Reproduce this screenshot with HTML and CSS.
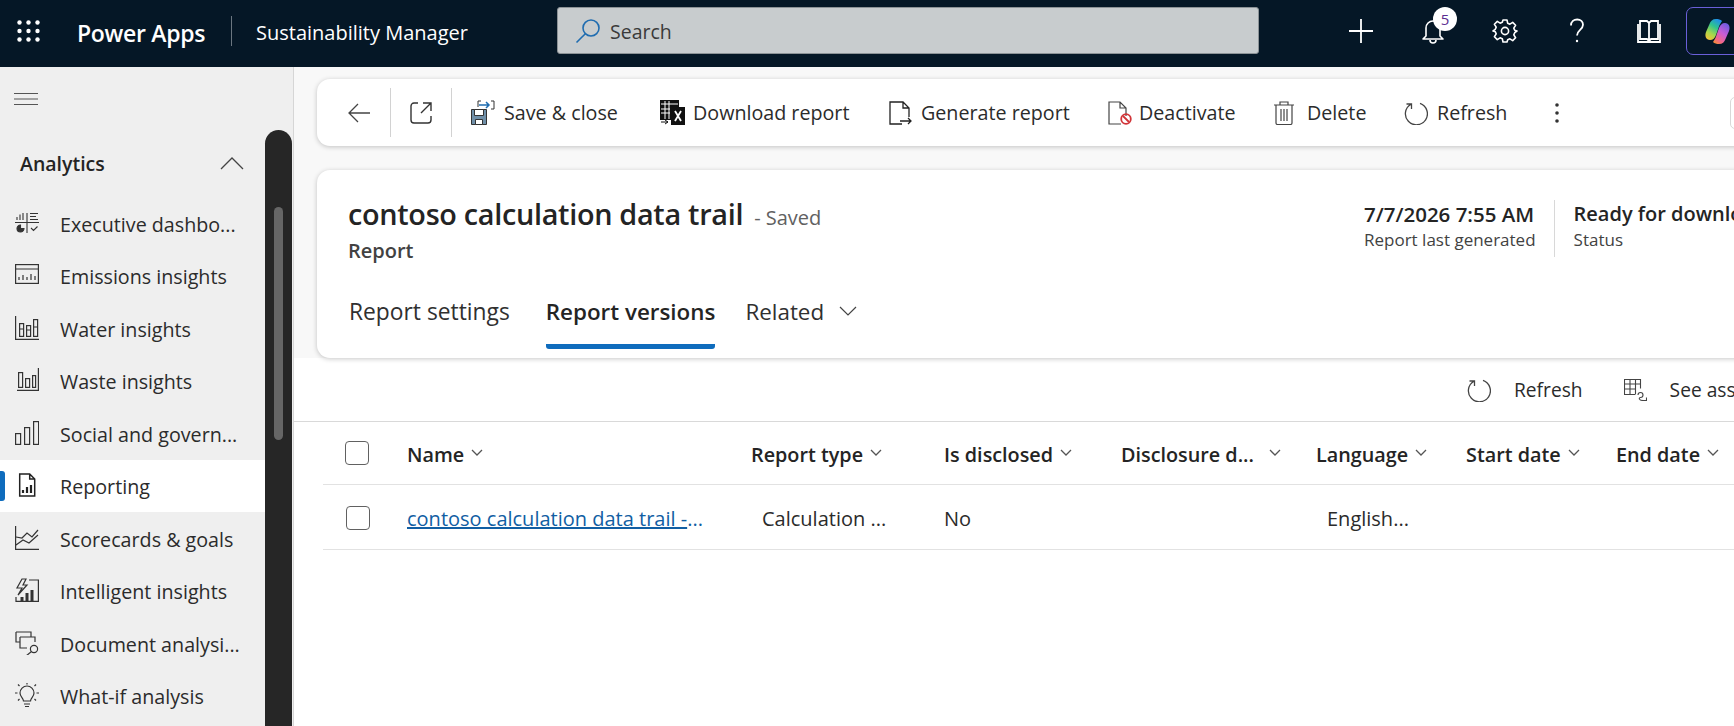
FILE: index.html
```html
<!DOCTYPE html>
<html lang="en">
<head>
    <meta charset="UTF-8">
    <title>Sustainability Manager</title>
    <link rel="stylesheet" href="styles.css">
</head>
<body>
<svg class="defs" width="0" height="0">
    <defs>
        <linearGradient id="copA" x1="0.7" y1="0" x2="0.2" y2="1">
            <stop offset="0" stop-color="#1f8fe8"/><stop offset="0.35" stop-color="#2fc48f"/><stop offset="0.7" stop-color="#a6d84a"/><stop offset="1" stop-color="#f2c13a"/>
        </linearGradient>
        <linearGradient id="copB" x1="0.8" y1="0" x2="0.2" y2="1">
            <stop offset="0" stop-color="#6a5ce0"/><stop offset="0.45" stop-color="#c65cd6"/><stop offset="0.8" stop-color="#f2668a"/><stop offset="1" stop-color="#f58a3c"/>
        </linearGradient>
    </defs>
</svg>

<header class="topbar">
    <svg class="waffle" width="23" height="22" viewBox="0 0 23 22" fill="#fff">
        <circle cx="2.5" cy="2.5" r="2.2"/><circle cx="11.5" cy="2.5" r="2.2"/><circle cx="20.5" cy="2.5" r="2.2"/>
        <circle cx="2.5" cy="11" r="2.2"/><circle cx="11.5" cy="11" r="2.2"/><circle cx="20.5" cy="11" r="2.2"/>
        <circle cx="2.5" cy="19.5" r="2.2"/><circle cx="11.5" cy="19.5" r="2.2"/><circle cx="20.5" cy="19.5" r="2.2"/>
    </svg>
    <span class="brand">Power Apps</span>
    <span class="brand-sep"></span>
    <span class="app-name">Sustainability Manager</span>
    <div class="search">
        <svg width="26" height="26" viewBox="0 0 26 26" fill="none" stroke="#1f6cb0" stroke-width="1.6">
            <circle cx="16" cy="10" r="8"/><path d="M10.3 15.7 1.5 24.5"/>
        </svg>
        <span>Search</span>
    </div>
    <div class="top-icons">
        <svg class="top-icon" width="26" height="26" viewBox="0 0 26 26" stroke="#fff" stroke-width="1.8" fill="none"><path d="M13 1v24M1 13h24"/></svg>
        <span class="bell">
            <svg width="26" height="26" viewBox="0 0 26 26" stroke="#fff" stroke-width="1.6" fill="none">
                <path d="M6 18V10a7 7 0 0 1 14 0v8l3 3H3z" stroke-linejoin="round"/><path d="M10 22a3 3 0 0 0 6 0"/>
            </svg>
            <span class="badge">5</span>
        </span>
        <svg class="top-icon" width="26" height="26" viewBox="0 0 26 26" stroke="#fff" stroke-width="1.6" fill="none">
            <circle cx="13" cy="13" r="3.6"/>
            <path d="M11 2h4l.7 3.3 2.2.9 2.8-1.8 2.9 2.9-1.8 2.8.9 2.2L25 13l-2.3 1.7-.9 2.2 1.8 2.8-2.9 2.9-2.8-1.8-2.2.9L15 24h-4l-.7-3.3-2.2-.9-2.8 1.8-2.9-2.9 1.8-2.8-.9-2.2L1 13l2.3-1.7.9-2.2-1.8-2.8 2.9-2.9 2.8 1.8 2.2-.9z" stroke-linejoin="round"/>
        </svg>
        <svg class="top-icon" width="26" height="26" viewBox="0 0 26 26" stroke="#fff" stroke-width="1.8" fill="none">
            <path d="M7 7.5C7 3.5 10 1.5 13.2 1.5c3.400 0 5.800 2.300 5.800 5.300 0 5-6 5.200-6 10.700"/><circle cx="13" cy="23" r="1.200" fill="#fff" stroke="none"/>
        </svg>
        <svg class="top-icon" width="26" height="26" viewBox="0 0 26 26" stroke="#fff" stroke-width="1.8" fill="none">
            <path d="M4 3h7l2 2 2-2h7v18h-7l-2 2-2-2H4zM13 5v18M2 6v18h22V6"/>
        </svg>
        <div class="copilot">
            <svg width="27" height="27" viewBox="0 0 27 27">
                <path d="M18 3c-1.500-1.500-3.500-2-6-2-3.500 0-5.500 2-6.500 5L2 14c-1.500 4 0 8 4 8 3 0 5-2 6-5l2.500-7c.5-2 2-5 3.500-7z" fill="url(#copA)"/>
                <path d="M9 24c1.500 1.500 3.500 2 6 2 3.500 0 5.500-2 6.500-5L25 13c1.500-4 0-8-4-8-3 0-5 2-6 5l-2.500 7c-.5 2-2 5-3.500 7z" fill="url(#copB)"/>
            </svg>
        </div>
    </div>
</header>

<div class="layout">
    <aside class="sidebar">
        <div class="side-col">
            <svg class="hamburger" width="24" height="12" viewBox="0 0 24 12" stroke="#555" stroke-width="1"><path d="M0 .5h24M0 6h24M0 11.500h24"/></svg>
            <div class="side-group">
                <span>Analytics</span>
                <svg width="24" height="14" viewBox="0 0 24 14" fill="none" stroke="#444" stroke-width="1.300"><path d="M1 13 12 2l11 11"/></svg>
            </div>
            <nav class="side-nav">
                <a class="side-item">
                    <svg width="24" height="24" viewBox="0 0 24 24" fill="none" stroke="#333" stroke-width="1.100"><path d="M0 11.500h24M12 2v20M2 9V6M5 9V3.500M8 9V2M15 2.500h8M15 5.500h6M15 8.500h8M16 17l2.500 2.500 4-4"/><path d="M5.500 14a3.500 3.500 0 1 0 3.500 3.500H5.500z" fill="#333"/></svg>
                    Executive dashbo...
                </a>
                <a class="side-item">
                    <svg width="24" height="24" viewBox="0 0 24 24" fill="none" stroke="#333" stroke-width="1.200"><rect x=".6" y="1.600" width="22.800" height="18.800"/><path d="M1 6h22M4 17v-3M8 17v-5M12 17v-3M16 17v-6M20 17v-4"/></svg>
                    Emissions insights
                </a>
                <a class="side-item">
                    <svg width="24" height="24" viewBox="0 0 24 24" fill="none" stroke="#333" stroke-width="1.200"><path d="M.6 0v23.400H24"/><rect x="4.600" y="7.600" width="4" height="12.800"/><rect x="11.600" y="9.600" width="4" height="10.800"/><rect x="18.600" y="3.600" width="4" height="16.800"/><path d="M4.600 13h4M11.600 14h4M18.600 11h4"/></svg>
                    Water insights
                </a>
                <a class="side-item">
                    <svg width="24" height="24" viewBox="0 0 24 24" fill="none" stroke="#333" stroke-width="1.200"><path d="M2 22.400h21.400V0"/><rect x="3.600" y="4.600" width="4" height="14.800"/><rect x="10.600" y="10.600" width="4" height="8.800"/><rect x="17.600" y="7.600" width="3" height="11.800"/></svg>
                    Waste insights
                </a>
                <a class="side-item">
                    <svg width="24" height="24" viewBox="0 0 24 24" fill="none" stroke="#333" stroke-width="1.200"><rect x=".6" y="12.600" width="5" height="10.800"/><rect x="9.600" y="6.600" width="5" height="16.800"/><rect x="18.600" y=".6" width="5" height="22.800"/></svg>
                    Social and govern...
                </a>
                <a class="side-item active">
                    <svg width="24" height="24" viewBox="0 0 24 24" fill="none" stroke="#222" stroke-width="1.500"><path d="M4.700 1h10l5 5v17h-15zM14.700 1v5h5"/><path d="M8 20v-3M12 20v-6M16 20v-8" stroke-width="2.200"/></svg>
                    Reporting
                </a>
                <a class="side-item">
                    <svg width="24" height="24" viewBox="0 0 24 24" fill="none" stroke="#333" stroke-width="1.200"><path d="M.6 0v23.400H24M1 19l7-5 6 3 9-8"/><path d="M1 11l6 1 5-5 5 4 6-7"/></svg>
                    Scorecards &amp; goals
                </a>
                <a class="side-item">
                    <svg width="24" height="24" viewBox="0 0 24 24" fill="none" stroke="#333" stroke-width="1.200"><path d="M7 1 2 10h5l-4 7 9-10H8l3-6z"/><path d="M14 2h9.400v21.400H1V19"/><path d="M7 23v-4M12 23v-8M17 23v-11" stroke-width="3"/></svg>
                    Intelligent insights
                </a>
                <a class="side-item">
                    <svg width="24" height="24" viewBox="0 0 24 24" fill="none" stroke="#333" stroke-width="1.200"><path d="M1 1h15v5M1 1v10h4"/><path d="M5 6h15v5M5 6v11h7"/><circle cx="19" cy="18" r="3.600"/><path d="M16.500 20.500 11 25"/></svg>
                    Document analysi...
                </a>
                <a class="side-item">
                    <svg width="24" height="24" viewBox="0 0 24 24" fill="none" stroke="#333" stroke-width="1.200"><path d="M8.500 18c0-3-3.500-4-3.500-8a7 7 0 0 1 14 0c0 4-3.500 5-3.500 8zM9 21h6M10 23.500h4M12 0v1.500M2.500 10H0M24 10h-2.500M4.500 3 3 1.500M19.500 3 21 1.500M4.500 16 3 17.500M19.500 16l1.500 1.500"/></svg>
                    What-if analysis
                </a>
            </nav>
        </div>
        <div class="side-rail"><div class="side-thumb"></div></div>
    </aside>

    <main class="content">
        <div class="head-area">
            <div class="card toolbar">
                <button class="tool tool-back">
                    <svg width="22" height="20" viewBox="0 0 22 20" fill="none" stroke="#444" stroke-width="1.300"><path d="M22 10H1M10 1l-9 9 9 9"/></svg>
                </button>
                <span class="tool-sep"></span>
                <button class="tool tool-open">
                    <svg width="22" height="22" viewBox="0 0 22 22" fill="none" stroke="#333" stroke-width="1.400"><path d="M8 1H4a3 3 0 0 0-3 3v14a3 3 0 0 0 3 3h14a3 3 0 0 0 3-3v-4M13 1h8v8M21 1 11 11"/></svg>
                </button>
                <span class="tool-sep"></span>
                <button class="tool tool-save">
                    <svg width="24" height="25" viewBox="0 0 24 25" fill="none">
                        <path d="M.5 9.500h15v15H.5z" fill="#6f8fa8" stroke="#333"/><path d="M3.500 9.500h9v6h-9zM4.500 19.500h7v5h-7z" fill="#fff" stroke="#333"/>
                        <path d="M7 7V1h3M20 1h3v8h-3" stroke="#333"/><path d="M8 5h10M15 2l3 3-3 3" stroke="#1f6cb0" stroke-width="1.500"/>
                    </svg>
                    Save &amp; close
                </button>
                <button class="tool tool-download">
                    <svg width="25" height="25" viewBox="0 0 25 25" fill="none">
                        <path d="M0 0h19v7h-7v13H0z" fill="#111"/><path d="M1 4h17M5 1v18M9 1v18M1 9h9M1 13h9" stroke="#fff"/>
                        <rect x="11" y="7" width="14" height="18" fill="#111"/><path d="M15 11l6 10M21 11l-6 10" stroke="#fff" stroke-width="1.800"/>
                        <path d="M1 22h7M5 20l3 2-3 2" stroke="#111"/>
                    </svg>
                    Download report
                </button>
                <button class="tool tool-generate">
                    <svg width="23" height="24" viewBox="0 0 23 24" fill="none" stroke="#222" stroke-width="1.300">
                        <path d="M13 23H1V1h13l6 6v9M14 1v6h6"/><path d="M11 20h11M19 17l3 3-3 3"/>
                    </svg>
                    Generate report
                </button>
                <button class="tool tool-deactivate">
                    <svg width="24" height="24" viewBox="0 0 24 24" fill="none">
                        <path d="M13 23H1V1h11l6 6v8M12 1v6h6" stroke="#444" stroke-width="1.200"/>
                        <circle cx="18" cy="18" r="4.800" stroke="#d13438" stroke-width="1.800"/><path d="m15 15 6 6" stroke="#d13438" stroke-width="1.800"/>
                    </svg>
                    Deactivate
                </button>
                <button class="tool tool-delete">
                    <svg width="20" height="24" viewBox="0 0 20 24" fill="none" stroke="#444" stroke-width="1.200"><path d="M0 4h20M6 4V1h8v3M2 4v18a1.500 1.500 0 0 0 1.500 1.500h13A1.500 1.500 0 0 0 18 22V4M7 8v12M10 8v12M13 8v12"/></svg>
                    Delete
                </button>
                <button class="tool tool-refresh">
                    <svg width="24" height="24" viewBox="0 0 24 24" fill="none" stroke="#444" stroke-width="1.300"><path d="M7 3.200a11 11 0 1 0 9-.8M7.500 8V3H2.500"/></svg>
                    Refresh
                </button>
                <svg class="tool-more" width="4" height="20" viewBox="0 0 4 20" fill="#333"><circle cx="2" cy="2" r="1.800"/><circle cx="2" cy="10" r="1.800"/><circle cx="2" cy="18" r="1.800"/></svg>
                <span class="tool-box"></span>
            </div>

            <div class="card record">
                <div class="record-top">
                    <div class="record-title">
                        <div class="title-line">
                            <h1>contoso calculation data trail</h1>
                            <span class="saved">- Saved</span>
                        </div>
                        <div class="entity">Report</div>
                    </div>
                    <div class="record-fields">
                        <div class="field">
                            <strong>7/7/2026 7:55 AM</strong>
                            <span>Report last generated</span>
                        </div>
                        <div class="field field-status">
                            <strong>Ready for download</strong>
                            <span>Status</span>
                        </div>
                    </div>
                </div>
                <div class="tabs">
                    <span class="tab tab-settings">Report settings</span>
                    <span class="tab tab-active">Report versions</span>
                    <span class="tab tab-related">Related
                        <svg width="18" height="10" viewBox="0 0 18 10" fill="none" stroke="#444" stroke-width="1.200"><path d="m1 1 8 8 8-8"/></svg>
                    </span>
                </div>
            </div>
        </div>

        <div class="subbar">
            <span class="sub-btn">
                <svg width="24" height="24" viewBox="0 0 24 24" fill="none" stroke="#444" stroke-width="1.300"><path d="M7 3.200a11 11 0 1 0 9-.8M7.500 8V3H2.500"/></svg>
                Refresh
            </span>
            <span class="sub-btn">
                <svg width="23" height="22" viewBox="0 0 23 22" fill="none" stroke="#444" stroke-width="1.100"><path d="M11 15.500H.5V.5h16v9M.5 5h16M.5 10h11M6 .5v15M11.500.5v15"/><path d="M14 16a2.500 2.500 0 1 1 2.500 2.500c-1 0-1.500.8-1 1.700.6 1 2 1.300 3.500 1.300h3.500v-3"/></svg>
                See associated
            </span>
        </div>

        <div class="grid-wrap">
            <div class="grid grid-head">
                <span class="check"></span>
                <span class="col">Name<svg class="sort" viewBox="0 0 12 7"><path d="m1 1 5 5 5-5"/></svg></span>
                <span class="col">Report type<svg class="sort" viewBox="0 0 12 7"><path d="m1 1 5 5 5-5"/></svg></span>
                <span class="col">Is disclosed<svg class="sort" viewBox="0 0 12 7"><path d="m1 1 5 5 5-5"/></svg></span>
                <span class="col">Disclosure d...<svg class="sort sort-far" viewBox="0 0 12 7"><path d="m1 1 5 5 5-5"/></svg></span>
                <span class="col">Language<svg class="sort" viewBox="0 0 12 7"><path d="m1 1 5 5 5-5"/></svg></span>
                <span class="col">Start date<svg class="sort" viewBox="0 0 12 7"><path d="m1 1 5 5 5-5"/></svg></span>
                <span class="col">End date<svg class="sort" viewBox="0 0 12 7"><path d="m1 1 5 5 5-5"/></svg></span>
            </div>
            <div class="grid grid-row">
                <span class="check"></span>
                <span><a class="link">contoso calculation data trail -</a><span class="link-more">...</span></span>
                <span class="cell-in">Calculation ...</span>
                <span>No</span>
                <span></span>
                <span class="cell-in">English...</span>
                <span></span>
                <span></span>
            </div>
        </div>
    </main>
</div>
</body>
</html>
```

FILE: styles.css
```css
* { box-sizing: border-box; }

html, body {
    margin: 0;
    height: 100%;
    overflow: hidden;
}

body {
    font-family: "Open Sans", "Noto Sans", sans-serif;
    font-size: 20px;
    color: #242424;
    background: #fff;
}

.defs { position: absolute; }

/* top bar */
.topbar {
    height: 67px;
    background: #051726;
    color: #fff;
    display: flex;
    align-items: center;
    padding: 0 0 6px 17px;
}

.waffle { margin-right: 37px; flex: none; }

.brand {
    font-size: 23px;
    font-weight: 600;
    letter-spacing: -0.3px;
    width: 154px;
    flex: none;
    margin-top: 4px;
    white-space: nowrap;
}

.brand-sep {
    width: 1px;
    height: 30px;
    background: #6b7680;
    margin-right: 24px;
    flex: none;
}

.app-name {
    font-size: 20px;
    width: 301px;
    flex: none;
    margin-top: 4px;
    white-space: nowrap;
}

.search {
    width: 702px;
    height: 47px;
    flex: none;
    background: #c8ccce;
    border: 1px solid #8c9296;
    border-radius: 3px;
    display: flex;
    align-items: center;
    gap: 9px;
    padding: 1px 0 0 17px;
    color: #3a3a3a;
    font-size: 19.500px;
}

.top-icons {
    display: flex;
    align-items: center;
    margin-left: 89px;
    gap: 46px;
}

.top-icon { flex: none; }

.bell { position: relative; display: flex; }

.badge {
    position: absolute;
    left: 13px;
    top: -11px;
    width: 24px;
    height: 24px;
    border-radius: 50%;
    background: #fff;
    color: #5c2d91;
    font-size: 15px;
    text-align: center;
    line-height: 24px;
}

.copilot {
    width: 60px;
    height: 48px;
    flex: none;
    margin-left: -22px;
    border: 1px solid #6a5fd8;
    border-radius: 7px;
    padding: 10px 0 0 17px;
}

/* layout */
.layout {
    display: flex;
    height: 659px;
}

/* sidebar */
.sidebar {
    width: 294px;
    flex: none;
    background: #efefef;
    border-right: 1px solid #d6d6d6;
    display: flex;
}

.side-col { width: 265px; flex: none; }

.hamburger {
    display: block;
    margin: 26px 0 0 14px;
}

.side-group {
    display: flex;
    justify-content: space-between;
    align-items: center;
    margin-top: 43px;
    height: 30px;
    padding: 0 21px 0 20px;
    font-weight: 600;
    font-size: 19.500px;
}

.side-nav { margin-top: 19px; }

.side-item {
    height: 52.500px;
    display: flex;
    align-items: center;
    gap: 21px;
    padding: 2px 0 0 15px;
    font-size: 19.700px;
    white-space: nowrap;
    color: #2b2b2b;
}

.side-item svg { flex: none; margin-top: -3px; }

.side-item.active {
    background: #fff;
    position: relative;
}

.side-item.active::before {
    content: "";
    position: absolute;
    left: 0;
    top: 11px;
    width: 5px;
    height: 30px;
    background: #0f6cbd;
    border-radius: 0 3px 3px 0;
}

.side-rail {
    width: 27px;
    margin-top: 63px;
    background: #262626;
    border-radius: 14px 14px 0 0;
    padding-top: 77px;
}

.side-thumb {
    width: 9px;
    height: 233px;
    margin-left: 9px;
    background: #666;
    border-radius: 5px;
}

/* main area */
.content {
    flex: 1;
    min-width: 0;
    overflow: hidden;
}

.head-area {
    height: 291px;
    background: #f8f8f8;
    padding: 12px 0 0 23px;
}

.card {
    width: 1500px;
    background: #fff;
    border-radius: 13px;
    box-shadow: 0 1px 5px rgba(0, 0, 0, 0.22);
}

/* command bar */
.toolbar {
    height: 67px;
    display: flex;
    align-items: center;
    white-space: nowrap;
}

.tool {
    display: flex;
    align-items: center;
    flex: none;
    gap: 9px;
    border: 0;
    padding: 0;
    background: none;
    font: inherit;
    color: #2b2b2b;
    font-size: 19.700px;
}

.tool-back { margin-left: 31px; }
.tool-open { margin: 0 19px; }
.tool-save { margin-left: 19px; width: 189px; }
.tool-download { width: 229px; gap: 8px; }
.tool-generate { width: 219px; gap: 9px; }
.tool-deactivate { width: 166px; gap: 7px; }
.tool-delete { width: 130px; gap: 13px; }
.tool-refresh { width: 151px; gap: 9px; }

.tool-sep {
    width: 1px;
    height: 49px;
    background: #d2d2d2;
    flex: none;
}

.tool-back + .tool-sep { margin-left: 20px; }

.tool-box {
    width: 30px;
    height: 32px;
    margin-left: 171px;
    border: 1px solid #d8d8d8;
    border-radius: 5px;
    flex: none;
}

/* record header */
.record {
    height: 188px;
    margin-top: 24px;
    padding: 24px 0 0 31px;
}

.record-top {
    display: flex;
    height: 89px;
}

.record-title { width: 1016px; flex: none; }

.title-line {
    display: flex;
    align-items: baseline;
    gap: 11px;
}

h1 {
    margin: 0;
    font-size: 28.800px;
    font-weight: 600;
    letter-spacing: -0.3px;
    line-height: 40px;
    white-space: nowrap;
}

.saved {
    color: #616161;
    font-size: 20px;
}

.entity {
    font-size: 20px;
    font-weight: 600;
    color: #424242;
    margin-top: 3px;
}

.record-fields { display: flex; padding-top: 6px; }

.field {
    display: flex;
    flex-direction: column;
    padding-right: 18px;
    white-space: nowrap;
}

.field strong {
    font-size: 20.500px;
    font-weight: 600;
    line-height: 28px;
}

.field span {
    font-size: 17px;
    line-height: 24px;
    color: #424242;
}

.field-status {
    border-left: 1px solid #d8d8d8;
    padding-left: 19px;
    height: 57px;
}

.field-status strong { font-size: 20px; }

.tabs {
    display: flex;
    align-items: flex-start;
    margin-top: 13px;
    padding-left: 1px;
    font-size: 22.400px;
    white-space: nowrap;
}

.tab {
    display: block;
    height: 53px;
    line-height: 32px;
    margin-right: 37px;
    color: #303030;
}

.tab-settings {
    font-size: 22.800px;
    margin-right: 36px;
}

.tab-active {
    font-weight: 600;
    color: #242424;
    border-bottom: 5px solid #0f6cbd;
    border-radius: 0 0 3px 3px;
    margin-right: 30px;
}

.tab-related svg {
    margin-left: 9px;
    vertical-align: 4px;
}

/* grid commands */
.subbar {
    height: 64px;
    display: flex;
    align-items: center;
    padding-left: 1173px;
    border-bottom: 1px solid #d9d9d9;
    white-space: nowrap;
    color: #2b2b2b;
    font-size: 19.200px;
}

.sub-btn {
    display: flex;
    align-items: center;
    gap: 23px;
    margin-right: 41px;
}

/* grid */
.grid-wrap {
    margin-left: 29px;
    width: 1500px;
}

.grid {
    display: grid;
    grid-template-columns: 62px 344px 193px 177px 195px 150px 150px 150px;
    align-items: center;
    border-bottom: 1px solid #e2e2e2;
    white-space: nowrap;
    padding-left: 22px;
    font-size: 20px;
}

.grid-head {
    height: 63px;
    font-weight: 600;
    font-size: 19.800px;
}

.grid-head .col { padding-top: 2px; }

.grid-row {
    height: 65px;
    color: #2b2b2b;
}

.grid-row > * { position: relative; top: 1px; }

.check {
    display: block;
    width: 24px;
    height: 24px;
    border: 1px solid #616161;
    border-radius: 4px;
    background: #fff;
}

.grid-row .check { margin-left: 1px; }

.col {
    display: flex;
    align-items: center;
}

.sort {
    width: 12px;
    height: 7px;
    margin: -3px 0 0 7px;
    fill: none;
    stroke: #555;
    stroke-width: 1.300;
}

.sort-far { margin-left: 15px; }

.link {
    color: #115ea3;
    text-decoration: underline;
}

.link-more { color: #115ea3; }

.cell-in { padding-left: 11px; }
```
